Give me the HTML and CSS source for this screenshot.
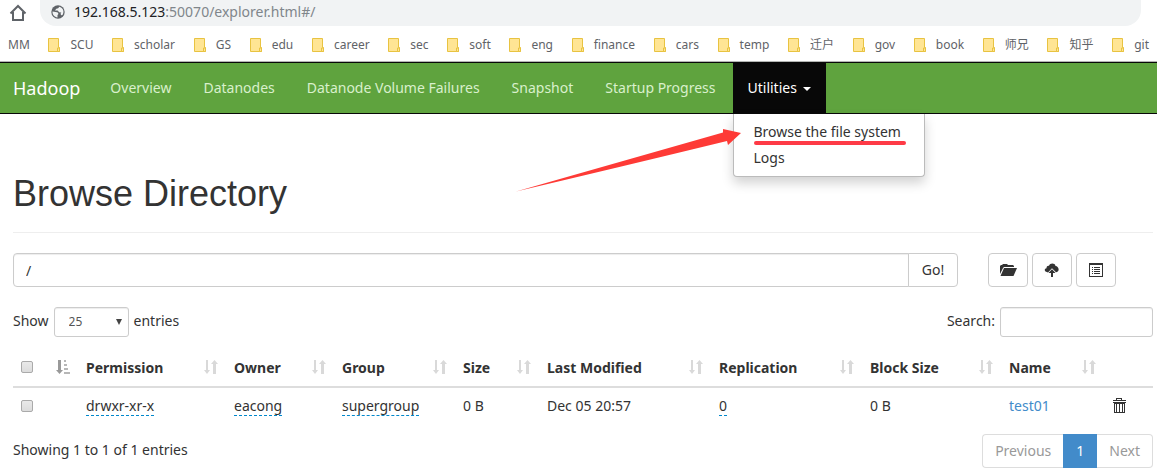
FILE: index.html
```html
<!DOCTYPE html>
<html lang="en">
<head>
<meta charset="utf-8">
<title>Browsing HDFS</title>
<link rel="stylesheet" href="styles.css">
</head>
<body>
<svg class="defs" aria-hidden="true">
  <symbol id="folder" viewBox="0 0 12 14"><path d="M.5.5h10v9h1v4H.5z" fill="#ffe594" stroke="#e8c341"/><path d="M9.500 13.500v-3.500h2v3.500z" fill="#ffe594" stroke="#e8c341"/></symbol>
  <symbol id="sort" viewBox="0 0 14 14"><path d="M2 0h2v10h2L3 14 0 10h2zM9 14V4H7l3.500-4L14 4h-2v10z" fill="currentColor"/></symbol>
</svg>
<header class="browser">
  <div class="toolbar">
    <button class="home" aria-label="Home"><svg width="18" height="18" viewBox="0 0 18 18"><path d="M1.500 9.500 9 2l7.500 7.500M4 8v8h10V8" fill="none" stroke="#5f6368" stroke-width="2"/></svg></button>
    <div class="address">
      <svg width="14" height="14" viewBox="0 0 14 14" aria-hidden="true"><circle cx="7" cy="7" r="6.700" fill="#5f6368"/><path d="M1.500 6.500 6 7.300c1 .2 1.500 1 1.300 2L6.500 10v2.400C3.500 12.300 1.300 9.500 1.500 6.500zM8 1.700c-.2 1.700-1.300 1.600-2.700 2L4 5.500c1 .2 2.200-.2 3 .3l1 1.400 2.400.3-.8 1 .4 1.800 1.500-.3C13.500 7 12.500 2.500 8 1.700z" fill="#f1f3f4"/></svg>
      <span class="url"><b>192.168.5.123</b>:50070/explorer.html#/</span>
    </div>
  </div>
  <nav class="bookmarks" aria-label="Bookmarks">
    <a href="#">MM</a>
    <a href="#"><svg><use href="#folder"/></svg>SCU</a>
    <a href="#"><svg><use href="#folder"/></svg>scholar</a>
    <a href="#"><svg><use href="#folder"/></svg>GS</a>
    <a href="#"><svg><use href="#folder"/></svg>edu</a>
    <a href="#"><svg><use href="#folder"/></svg>career</a>
    <a href="#"><svg><use href="#folder"/></svg>sec</a>
    <a href="#"><svg><use href="#folder"/></svg>soft</a>
    <a href="#"><svg><use href="#folder"/></svg>eng</a>
    <a href="#"><svg><use href="#folder"/></svg>finance</a>
    <a href="#"><svg><use href="#folder"/></svg>cars</a>
    <a href="#"><svg><use href="#folder"/></svg>temp</a>
    <a href="#"><svg><use href="#folder"/></svg>迁户</a>
    <a href="#"><svg><use href="#folder"/></svg>gov</a>
    <a href="#"><svg><use href="#folder"/></svg>book</a>
    <a href="#"><svg><use href="#folder"/></svg>师兄</a>
    <a href="#"><svg><use href="#folder"/></svg>知乎</a>
    <a href="#"><svg><use href="#folder"/></svg>git</a>
  </nav>
</header>
<nav class="navbar" aria-label="Main">
  <a class="brand" href="#">Hadoop</a>
  <ul class="nav">
    <li><a href="#">Overview</a></li>
    <li><a href="#">Datanodes</a></li>
    <li><a href="#">Datanode Volume Failures</a></li>
    <li><a href="#">Snapshot</a></li>
    <li><a href="#">Startup Progress</a></li>
    <li class="open">
      <a href="#">Utilities <span class="caret"></span></a>
      <ul class="menu">
        <li><a href="#"><span class="marked">Browse the file system</span></a></li>
        <li><a href="#">Logs</a></li>
      </ul>
      <svg class="arrow" width="226" height="66" viewBox="0 0 226 66" aria-hidden="true"><path d="M0 62.500Q100 34 207 3.500V0l18 4-13 12-1-4Q104 38 0 62.500z" fill="#fe3a36"/></svg>
    </li>
  </ul>
</nav>
<main class="page">
  <h1>Browse Directory</h1>
  <div class="path-row">
    <form class="path">
      <input type="text" value="/" aria-label="Directory">
      <button type="button">Go!</button>
    </form>
    <div class="actions">
      <button aria-label="Create directory"><svg width="18" height="14" viewBox="0 0 18 14"><path d="M1 11V3l1-1h1l1-1h4l1 1h5l1 1v1H5L4 5z"/><path d="M5 5h13l-3.500 8H1.500z"/></svg></button>
      <button aria-label="Upload files"><svg width="16" height="14" viewBox="0 0 16 14"><path d="M4 9.500 1.500 8.500C0 7 1 5.500 2.500 5.300 2.500 3 4 2.500 5 2.800 6-.3 11-.1 11.500 3c3 .2 4.500 4.500 1.500 6L12 9.300 8 5.200z"/><path d="M8 6.300 11.500 10H9v4H7v-4H4.500z"/></svg></button>
      <button aria-label="Cut and paste"><svg width="14" height="14" viewBox="0 0 14 14"><path d="M0 0h14v14H0zM1 2v11h12V2z" fill-rule="evenodd"/><path d="M3 4h1v1H3zM5 4h6v1H5zM3 6h1v1H3zM5 6h6v1H5zM3 8h1v1H3zM5 8h6v1H5zM3 10h1v1H3zM5 10h6v1H5z"/></svg></button>
    </div>
  </div>
  <div class="filters">
    <label>Show <span class="select"><select><option>25</option></select></span> entries</label>
    <label>Search: <input type="search"></label>
  </div>
  <table>
    <colgroup><col class="c-check"><col class="c-perm"><col class="c-owner"><col class="c-group"><col class="c-size"><col class="c-date"><col class="c-repl"><col class="c-block"><col class="c-name"><col class="c-del"></colgroup>
    <thead>
      <tr>
        <th><div><input type="checkbox" aria-label="Select all"><svg class="sorted" viewBox="0 0 14 14"><path d="M2 0h3v10h2l-3.500 4L0 10h2z"/><path d="M8 0h2v2H8zM8 4h3v2H8zM8 8h4v2H8zM8 12h6v2H8z" opacity=".7"/></svg></div></th>
        <th><div>Permission<svg><use href="#sort"/></svg></div></th>
        <th><div>Owner<svg><use href="#sort"/></svg></div></th>
        <th><div>Group<svg><use href="#sort"/></svg></div></th>
        <th><div>Size<svg><use href="#sort"/></svg></div></th>
        <th><div>Last Modified<svg><use href="#sort"/></svg></div></th>
        <th><div>Replication<svg><use href="#sort"/></svg></div></th>
        <th><div>Block Size<svg><use href="#sort"/></svg></div></th>
        <th><div>Name<svg><use href="#sort"/></svg></div></th>
        <th></th>
      </tr>
    </thead>
    <tbody>
      <tr>
        <td><input type="checkbox" aria-label="Select test01"></td>
        <td><span class="editable">drwxr-xr-x</span></td>
        <td><span class="editable">eacong</span></td>
        <td><span class="editable">supergroup</span></td>
        <td>0 B</td>
        <td>Dec 05 20:57</td>
        <td><span class="editable">0</span></td>
        <td>0 B</td>
        <td><a href="#">test01</a></td>
        <td><button class="delete" aria-label="Delete"><svg width="14" height="16" viewBox="0 0 14 16"><path d="M4 2V0h6v2h4v1H1V2zm1-1v1h4V1zM1 4h13v1H1zM2 5h11v10H2zM3 6v8h1V6zM5 6v8h2V6zM8 6v8h2V6zM11 6v8h1V6z" fill-rule="evenodd"/></svg></button></td>
      </tr>
    </tbody>
  </table>
  <div class="footer">
    <span>Showing 1 to 1 of 1 entries</span>
    <div class="pager"><button disabled>Previous</button><button class="current">1</button><button disabled>Next</button></div>
  </div>
</main>
</body>
</html>
```
FILE: styles.css
```css
* { box-sizing: border-box; }
body {
  margin: 0;
  background: #fff;
  color: #333;
  font: 14px/20px "Noto Sans", "Noto Sans CJK SC", sans-serif;
}
button, input, select { font: inherit; color: inherit; }
button { cursor: pointer; }
a { color: #428bca; text-decoration: none; }
ul { margin: 0; padding: 0; list-style: none; }
.defs { display: none; }

.browser { border-bottom: 1px solid #b3b5b3; }
.toolbar { display: flex; height: 26px; padding-right: 16px; }
.home { width: 40px; padding: 0 0 0 9px; border: 0; background: none; text-align: left; }
.home svg { display: block; }
.address {
  flex: 1;
  display: flex;
  align-items: center;
  gap: 9px;
  padding: 0 11px 2px;
  border-radius: 0 0 16px 16px;
  background: #f1f3f4;
}
.url { color: #80868b; }
.url b { color: #202124; font-weight: 400; }
.bookmarks {
  display: flex;
  justify-content: space-between;
  align-items: center;
  height: 35px;
  padding: 2px 8px 0;
  font-size: 12px;
}
.bookmarks a { display: flex; align-items: center; gap: 10px; color: #5f6368; white-space: nowrap; }
.bookmarks svg { width: 12px; height: 14px; }

.navbar {
  display: flex;
  padding-left: 13px;
  border: solid #080808;
  border-width: 1px 0;
  background: #5fa33e;
  white-space: nowrap;
}
.navbar a { display: block; }
.brand { padding: 15px 15px 15px 0; color: #fff; font-size: 18px; }
.nav { display: flex; gap: 2px; }
.nav > li > a { padding: 15px; color: #d9f0cc; }
.nav > .open { position: relative; }
.nav > .open > a { background: #080808; color: #fff; }
.caret {
  display: inline-block;
  margin-left: 2px;
  vertical-align: middle;
  border: 4px solid transparent;
  border-top-color: #fff;
  border-bottom: 0;
}
.menu {
  position: absolute;
  top: 100%;
  left: 0;
  width: 192px;
  margin-top: 1px;
  padding: 5px 0;
  border: 1px solid #bbb;
  border-top: 0;
  border-radius: 0 0 4px 4px;
  background: #fff;
  box-shadow: 0 6px 12px rgba(0, 0, 0, .18);
}
.menu a { padding: 3px 20px; color: #333; }
.marked { position: relative; }
.marked::after {
  content: "";
  position: absolute;
  left: 0;
  right: -5px;
  bottom: -4px;
  height: 4px;
  border-radius: 2px;
  background: #fe3a46;
}
.arrow { position: absolute; top: 66px; right: 84px; }

.page { padding: 60px 4px 0 13px; }
h1 {
  margin: 0 0 20px;
  padding-bottom: 18px;
  border-bottom: 1px solid #eee;
  font: 36px/40px "Liberation Sans", sans-serif;
}
.path-row { display: flex; gap: 30px; }
.path { flex: 1; display: flex; }
.path input, .path button, .actions button {
  height: 34px;
  padding: 6px 12px;
  border: 1px solid #ccc;
  border-radius: 4px;
  background: #fff;
}
.path input { flex: 1; min-width: 0; border-radius: 4px 0 0 4px; box-shadow: inset 0 1px 1px rgba(0, 0, 0, .075); }
.path button { width: 50px; margin-left: -1px; border-radius: 0 4px 4px 0; }
.actions { display: flex; gap: 4px; width: 165px; }
.actions button { display: grid; place-items: center; width: 40px; padding: 0; }
svg { fill: #333; }
.filters { display: flex; justify-content: space-between; margin-top: 20px; }
.filters label { display: flex; gap: 5px; line-height: 28px; }
.filters input, .filters select {
  height: 30px;
  border: 1px solid #ccc;
  border-radius: 3px;
  background: #fff;
  box-shadow: inset 0 1px 1px rgba(0, 0, 0, .075);
}
.filters input { width: 153px; padding: 5px 10px; }
.select { position: relative; }
.select select { display: block; width: 75px; padding: 0 14px; appearance: none; color: #555; font-size: 12px; }
.select::after {
  content: "";
  position: absolute;
  right: 7px;
  top: 12px;
  border: 3px solid transparent;
  border-top: 6px solid #444;
  border-bottom: 0;
}

table { width: 100%; margin-top: 13px; border-collapse: collapse; table-layout: fixed; }
.c-check { width: 65px; }
.c-perm { width: 148px; }
.c-owner { width: 108px; }
.c-group { width: 121px; }
.c-size { width: 84px; }
.c-date { width: 172px; }
.c-repl { width: 151px; }
.c-block { width: 139px; }
.c-name { width: 103px; }
.c-del { width: 49px; }
th, td { padding: 8px; text-align: left; white-space: nowrap; }
th { border-bottom: 2px solid #ddd; }
th div { display: flex; justify-content: space-between; align-items: center; height: 20px; }
th svg { width: 14px; height: 14px; margin-bottom: 3px; color: #d9d9d9; fill: currentColor; }
th .sorted { color: #999; }
td input, th input { display: block; }
input[type="checkbox"] {
  width: 12px;
  height: 12px;
  margin: 0;
  appearance: none;
  border: 1px solid #aaa;
  border-radius: 2px;
  background: linear-gradient(#e9e9e9, #dcdcdc);
}
th input[type="checkbox"] { margin-bottom: 3px; }
.editable { border-bottom: 1px dashed #08c; }
.delete { display: block; padding: 0; border: 0; background: none; }
.delete svg { display: block; }
.footer { display: flex; justify-content: space-between; align-items: flex-start; margin-top: 10px; }
.footer > span { margin-top: 6px; }
.pager { display: flex; }
.pager button { height: 34px; padding: 6px 12px; border: 1px solid #ddd; background: #fff; color: #999; }
.pager .current { border-color: #428bca; background: #428bca; color: #fff; }
.pager button:first-child { border-right: 0; border-radius: 4px 0 0 4px; }
.pager button:last-child { border-left: 0; border-radius: 0 4px 4px 0; }
```
